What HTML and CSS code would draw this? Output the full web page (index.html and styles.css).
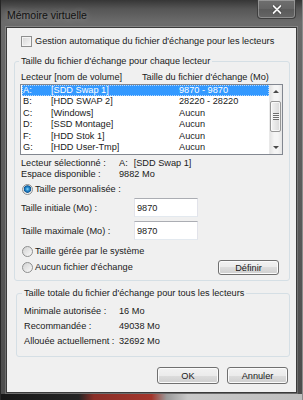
FILE: index.html
```html
<!DOCTYPE html>
<html>
<head>
    <meta charset='utf-8'>
    <title>Mémoire virtuelle</title>
    <link rel="stylesheet" href="styles.css">
</head>
<body>
    <div class="window">
        <div class="titlebar">
            <span class="title">Mémoire virtuelle</span>
            <div class="close">
                <svg width="10" height="9" viewBox="0 0 10 9">
                    <path d="M1.5 1 L8.5 8 M8.5 1 L1.5 8" stroke="#3a3a3a" stroke-width="3.2" stroke-linecap="round"/>
                    <path d="M1.5 1 L8.5 8 M8.5 1 L1.5 8" stroke="#f2f2f2" stroke-width="1.8" stroke-linecap="round"/>
                </svg>
            </div>
        </div>

        <div class="client">
            <div class="auto">
                <span class="check"></span>
                <span>Gestion automatique du fichier d'échange pour les lecteurs</span>
            </div>

            <div class="group first">
                <span class="legend">Taille du fichier d'échange pour chaque lecteur</span>
                <div class="cols">
                    <span>Lecteur [nom de volume]</span>
                    <span>Taille du fichier d'échange (Mo)</span>
                </div>
                <div class="listbox">
                    <div class="rows">
                        <div class="row selected"><span>A:</span><span>[SDD Swap 1]</span><span>9870 - 9870</span></div>
                        <div class="row"><span>B:</span><span>[HDD SWAP 2]</span><span>28220 - 28220</span></div>
                        <div class="row"><span>C:</span><span>[Windows]</span><span>Aucun</span></div>
                        <div class="row"><span>D:</span><span>[SSD Montage]</span><span>Aucun</span></div>
                        <div class="row"><span>F:</span><span>[HDD Stok 1]</span><span>Aucun</span></div>
                        <div class="row"><span>G:</span><span>[HDD User-Tmp]</span><span>Aucun</span></div>
                    </div>
                    <div class="scroll">
                        <div class="arrow"><span class="up"></span></div>
                        <div class="thumb"><span class="grip"></span></div>
                        <div class="track"></div>
                        <div class="arrow"><span class="down"></span></div>
                    </div>
                </div>

                <div class="info">
                    <span>Lecteur sélectionné :</span>
                    <span><span class="drive">A:</span>[SDD Swap 1]</span>
                    <span>Espace disponible :</span>
                    <span>9882 Mo</span>
                </div>

                <div class="option custom">
                    <span class="radio on"></span>
                    <span>Taille personnalisée :</span>
                </div>

                <div class="size">
                    <span class="size-label">Taille initiale (Mo) :</span>
                    <input type="text" class="box" value="9870">
                </div>
                <div class="size second">
                    <span class="size-label">Taille maximale (Mo) :</span>
                    <input type="text" class="box" value="9870">
                </div>

                <div class="option system">
                    <span class="radio"></span>
                    <span>Taille gérée par le système</span>
                </div>
                <div class="option none">
                    <span class="radio"></span>
                    <span>Aucun fichier d'échange</span>
                    <button class="btn define">Définir</button>
                </div>
            </div>

            <div class="group total">
                <span class="legend">Taille totale du fichier d'échange pour tous les lecteurs</span>
                <div class="totals">
                    <span>Minimale autorisée :</span><span>16 Mo</span>
                    <span>Recommandée :</span><span>49038 Mo</span>
                    <span>Allouée actuellement :</span><span>32692 Mo</span>
                </div>
            </div>

            <div class="actions">
                <button class="btn ok">OK</button>
                <button class="btn cancel">Annuler</button>
            </div>
        </div>
    </div>
</body>
</html>
```

FILE: styles.css
```css
*{
    margin: 0;
    padding: 0;
    box-sizing: border-box;
}
body{
    width: 303px;
    height: 400px;
    overflow: hidden;
    background-color: #2b2b2b;
    font-family: "Liberation Sans", Arial, sans-serif;
    font-size: 9.2px;
    color: #1a1a1a;
}
.window{
    width: 303px;
    height: 400px;
    display: flex;
    flex-direction: column;
    padding: 0 6px 7px 6px;
    background:
        linear-gradient(to right, #161616 0, #242424 26%, #8a2e27 31%, #a3362c 50%, #9a9a9a 55%, #c8c8c8 62%, #bebebe 100%) left bottom / 100% 6px no-repeat,
        linear-gradient(to bottom, #363636 0, #565656 9px, #6b6b6b 22px, #5f5f5f 140px, #4c4c4c 100%);
    box-shadow: inset 1px 0 0 #262626, inset -1px 0 0 #8c8c8c;
}

/* title bar */
.titlebar{
    height: 27px;
    display: flex;
    align-items: flex-start;
}
.title{
    margin-top: 9px;
    margin-left: 1px;
    font-size: 10.5px;
    line-height: 12px;
    color: #111;
    text-shadow: 0 0 6px rgba(255,255,255,0.45);
}
.close{
    margin-left: auto;
    margin-right: 1px;
    width: 39px;
    height: 19px;
    display: flex;
    align-items: center;
    justify-content: center;
    border: 1px solid #3e3e3e;
    border-top: none;
    border-radius: 0 0 4px 4px;
    background: linear-gradient(to bottom, #6f6f6f, #646464 50%, #5a5a5a 50%, #666 100%);
    box-shadow: inset 0 0 0 1px rgba(255,255,255,0.28);
}

/* dialog body */
.client{
    flex: 1;
    display: flex;
    flex-direction: column;
    background-color: #f0f0f0;
    border: 1px solid #3a3a3a;
    padding: 8px 6px 0 7px;
    box-shadow: 0 0 0 1px rgba(255,255,255,0.18);
}
.auto{
    display: flex;
    align-items: center;
    gap: 3px;
    height: 11px;
    margin-left: 7px;
    line-height: 11px;
}
.check{
    width: 11px;
    height: 11px;
    border: 1px solid #8e8f8f;
    background: linear-gradient(135deg, #d6d6d6, #f8f8f8);
    box-shadow: inset 0 0 0 1px #f4f4f4;
}

/* group boxes */
.group{
    display: flex;
    flex-direction: column;
    border: 1px solid #d5dfe5;
    border-radius: 3px;
    padding: 0 6px 5px 6px;
}
.first{
    margin-top: 14px;
}
.legend{
    align-self: flex-start;
    margin: -6px 0 0 -2px;
    padding: 0 2px;
    line-height: 11px;
    background-color: #f0f0f0;
}
.cols{
    display: grid;
    grid-template-columns: 121px auto;
    margin-top: 4.5px;
    line-height: 11px;
}

/* list of drives */
.listbox{
    display: flex;
    height: 71px;
    margin-top: 1.5px;
    margin-left: -1px;
    border: 1px solid #828790;
    background-color: white;
}
.rows{
    flex: 1;
    padding-left: 1px;
    overflow: hidden;
}
.row{
    display: grid;
    grid-template-columns: 28px 128px auto;
    height: 11.4px;
    line-height: 11.4px;
    padding-left: 1px;
}
.selected{
    background-color: #3399ff;
    color: white;
    outline: 1px dotted #b5d8ff;
    outline-offset: -1px;
}
.scroll{
    width: 13px;
    display: flex;
    flex-direction: column;
    background: linear-gradient(to right, #e4e4e4, #f5f5f5 35%, #f5f5f5 65%, #e6e6e6);
    border-left: 1px solid #e9e9e9;
}
.arrow{
    height: 13px;
    display: flex;
    align-items: center;
    justify-content: center;
}
.up{
    border-left: 3px solid transparent;
    border-right: 3px solid transparent;
    border-bottom: 3px solid #4a4a4a;
}
.down{
    border-left: 3px solid transparent;
    border-right: 3px solid transparent;
    border-top: 3px solid #4a4a4a;
}
.thumb{
    height: 31px;
    margin: 3px 1px 0 0;
    display: flex;
    align-items: center;
    justify-content: center;
    border: 1px solid #979797;
    border-radius: 2px;
    background: linear-gradient(to right, #f4f4f4, #e6e6e6 50%, #d9d9d9);
    box-shadow: inset 0 0 0 1px rgba(255,255,255,0.7);
}
.grip{
    width: 6px;
    height: 7px;
    background: repeating-linear-gradient(to bottom, #6e6e6e 0 1px, #f6f6f6 1px 2px);
}
.track{
    flex: 1;
}

/* selected drive details */
.info{
    display: grid;
    grid-template-columns: 98px auto;
    margin-top: 3px;
    line-height: 11px;
}
.drive{
    margin-right: 6px;
}
.option{
    display: flex;
    align-items: center;
    gap: 2px;
    margin-left: 1px;
    line-height: 11px;
}
.custom{
    margin-top: 4px;
    height: 11px;
}
.system{
    margin-top: 5.5px;
    height: 11px;
}
.none{
    margin-top: 3.5px;
    height: 15px;
}
.radio{
    width: 11px;
    height: 11px;
    border-radius: 50%;
    border: 1px solid #8e8f8f;
    background: linear-gradient(135deg, #d2d2d2, #f9f9f9);
}
.radio.on{
    background:
        radial-gradient(circle at 50% 45%, #8fdcf8 0, #2f93d6 1.6px, #0b5797 3.4px, #d9d9d9 4px, transparent 4.4px),
        linear-gradient(135deg, #d2d2d2, #f9f9f9);
}
.size{
    display: flex;
    align-items: center;
    height: 19px;
    margin-top: 3px;
}
.size.second{
    margin-top: 4px;
}
.size-label{
    width: 113px;
}
.box{
    width: 64px;
    height: 19px;
    padding-left: 2px;
    border: 1px solid #e2e3ea;
    border-top-color: #abadb3;
    border-bottom-color: #e3e9ef;
    background-color: white;
    font-family: "Liberation Sans", Arial, sans-serif;
    font-size: 9.2px;
    color: #1a1a1a;
    outline: none;
}

/* buttons */
.btn{
    height: 15px;
    border: 1px solid #707070;
    border-radius: 3px;
    background: linear-gradient(to bottom, #f2f2f2 0, #ebebeb 50%, #dddddd 50%, #cfcfcf 100%);
    box-shadow: inset 0 0 0 1px #fbfbfb;
    font-family: "Liberation Sans", Arial, sans-serif;
    font-size: 9.2px;
    color: #1a1a1a;
}
.define{
    width: 61px;
    margin-left: auto;
    margin-right: 4px;
}

/* totals */
.total{
    margin: 12px 0 0 2px;
    padding: 0 7px 7px 7px;
}
.totals{
    display: grid;
    grid-template-columns: 95px auto;
    margin-top: 5px;
    line-height: 15px;
}
.actions{
    display: flex;
    justify-content: flex-end;
    gap: 8px;
    margin-top: 10px;
    margin-right: 2px;
}
.ok,
.cancel{
    height: 17px;
}
.ok{
    width: 62px;
}
.cancel{
    width: 61px;
}
```
